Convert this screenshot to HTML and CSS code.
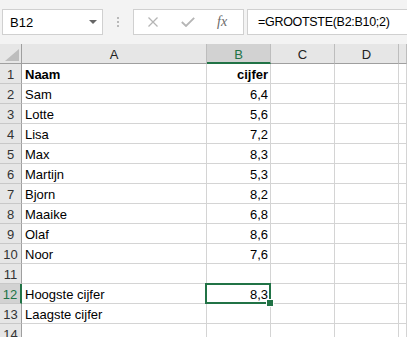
FILE: index.html
```html
<!DOCTYPE html>
<html lang="nl">
<head>
  <meta charset="UTF-8">
  <meta name="viewport" content="width=device-width, initial-scale=1.0">
  <title>Cijfers</title>
  <link rel="stylesheet" href="styles.css">
</head>
<body>
  <div class="toolbar">
    <div class="name-box">
      <span>B12</span>
      <svg class="drop" width="8" height="4" viewBox="0 0 8 4"><path d="M0 0H8L4 4Z" fill="#666"/></svg>
    </div>
    <div class="grip"><i></i><i></i><i></i></div>
    <div class="func-box">
      <svg width="10" height="10" viewBox="0 0 10 10"><path d="M0.5 0.5L9.5 9.5M9.5 0.5L0.5 9.5" stroke="#b5b5b5" stroke-width="1.3" fill="none"/></svg>
      <svg width="14" height="10" viewBox="0 0 14 10"><path d="M0.8 5L5 9L13.2 0.8" stroke="#b5b5b5" stroke-width="1.8" fill="none"/></svg>
      <span class="fx">fx</span>
    </div>
    <div class="formula">=GROOTSTE(B2:B10;2)</div>
  </div>

  <div class="sheet">
    <div class="row head">
      <div class="c corner"><svg width="14" height="12" viewBox="0 0 14 12"><path d="M14 0V12H0Z" fill="#bdbdbd"/></svg></div>
      <div class="c">A</div>
      <div class="c sel">B</div>
      <div class="c">C</div>
      <div class="c">D</div>
      <div class="c"></div>
    </div>
    <div class="row">
      <div class="c num">1</div><div class="c"><b>Naam</b></div><div class="c val"><b>cijfer</b></div><div class="c"></div><div class="c"></div><div class="c"></div>
    </div>
    <div class="row">
      <div class="c num">2</div><div class="c">Sam</div><div class="c val">6,4</div><div class="c"></div><div class="c"></div><div class="c"></div>
    </div>
    <div class="row">
      <div class="c num">3</div><div class="c">Lotte</div><div class="c val">5,6</div><div class="c"></div><div class="c"></div><div class="c"></div>
    </div>
    <div class="row">
      <div class="c num">4</div><div class="c">Lisa</div><div class="c val">7,2</div><div class="c"></div><div class="c"></div><div class="c"></div>
    </div>
    <div class="row">
      <div class="c num">5</div><div class="c">Max</div><div class="c val">8,3</div><div class="c"></div><div class="c"></div><div class="c"></div>
    </div>
    <div class="row">
      <div class="c num">6</div><div class="c">Martijn</div><div class="c val">5,3</div><div class="c"></div><div class="c"></div><div class="c"></div>
    </div>
    <div class="row">
      <div class="c num">7</div><div class="c">Bjorn</div><div class="c val">8,2</div><div class="c"></div><div class="c"></div><div class="c"></div>
    </div>
    <div class="row">
      <div class="c num">8</div><div class="c">Maaike</div><div class="c val">6,8</div><div class="c"></div><div class="c"></div><div class="c"></div>
    </div>
    <div class="row">
      <div class="c num">9</div><div class="c">Olaf</div><div class="c val">8,6</div><div class="c"></div><div class="c"></div><div class="c"></div>
    </div>
    <div class="row">
      <div class="c num">10</div><div class="c">Noor</div><div class="c val">7,6</div><div class="c"></div><div class="c"></div><div class="c"></div>
    </div>
    <div class="row">
      <div class="c num">11</div><div class="c"></div><div class="c val"></div><div class="c"></div><div class="c"></div><div class="c"></div>
    </div>
    <div class="row">
      <div class="c num sel">12</div><div class="c">Hoogste cijfer</div>
      <div class="c val active">8,3<span class="frame"></span><span class="handle"></span></div>
      <div class="c"></div><div class="c"></div><div class="c"></div>
    </div>
    <div class="row">
      <div class="c num">13</div><div class="c">Laagste cijfer</div><div class="c val"></div><div class="c"></div><div class="c"></div><div class="c"></div>
    </div>
    <div class="row">
      <div class="c num">14</div><div class="c"></div><div class="c val"></div><div class="c"></div><div class="c"></div><div class="c"></div>
    </div>
  </div>
</body>
</html>
```

FILE: styles.css
```css
body {
  margin: 0;
  font-family: "Liberation Sans", Arial, sans-serif;
  font-size: 13px;
  color: #000;
  background-color: #fff;
  overflow: hidden;
}
.toolbar {
  display: flex;
  align-items: flex-start;
  height: 44px;
  box-sizing: border-box;
  padding: 9px 0 0 2px;
  background-color: #f3f3f3;
}
.name-box {
  display: flex;
  align-items: center;
  justify-content: space-between;
  width: 101px;
  height: 26px;
  box-sizing: border-box;
  padding: 0 5px 0 7px;
  background-color: #fff;
  border: 1px solid #d0d0d0;
}
.grip {
  display: flex;
  flex-direction: column;
  align-items: center;
  gap: 2px;
  width: 30px;
  padding-top: 8px;
}
.grip i {
  width: 2px;
  height: 2px;
  background-color: #b9b9b9;
}
.func-box {
  display: flex;
  align-items: center;
  width: 111px;
  height: 26px;
  box-sizing: border-box;
  padding-left: 14px;
  background-color: #fff;
  border: 1px solid #d0d0d0;
}
.func-box svg:nth-child(2) {
  margin-left: 23px;
}
.fx {
  margin-left: 22px;
  font-family: "Liberation Serif", serif;
  font-style: italic;
  font-size: 14px;
  color: #6a6a6a;
}
.formula {
  flex: 1;
  height: 26px;
  box-sizing: border-box;
  margin-left: 3px;
  margin-right: -2px;
  padding-left: 10px;
  line-height: 24px;
  font-size: 12.5px;
  letter-spacing: -0.3px;
  background-color: #fff;
  border: 1px solid #d0d0d0;
}
.row {
  display: grid;
  grid-template-columns: 22px 185px 64px 64px 64px 1fr;
  height: 20px;
}
.c {
  position: relative;
  box-sizing: border-box;
  height: 20px;
  padding: 2px 3px 0 3px;
  line-height: 18px;
  white-space: nowrap;
  border-right: 1px solid #d4d4d4;
  border-bottom: 1px solid #d4d4d4;
}
.val {
  text-align: right;
  padding-right: 2px;
}
.head .c {
  text-align: center;
  color: #222;
  background-color: #e6e6e6;
  border-right-color: #bdbdbd;
  border-bottom-color: #9f9f9f;
}
.head .corner {
  display: flex;
  align-items: flex-end;
  justify-content: flex-end;
  padding: 0 2px 2px 0;
  border-right-color: #9f9f9f;
}
.head .sel {
  color: #217346;
  background-color: #d2d2d2;
  border-bottom: 2px solid #217346;
}
.num {
  text-align: center;
  padding: 2px 0 0 0;
  color: #333;
  background-color: #e6e6e6;
  border-right-color: #9f9f9f;
  border-bottom-color: #c8c8c8;
}
.num.sel {
  color: #217346;
  background-color: #d2d2d2;
  border-right: 2px solid #217346;
}
.active {
  z-index: 1;
}
.frame {
  position: absolute;
  top: -1px;
  left: -2px;
  right: -1px;
  bottom: -1px;
  border: 2px solid #217346;
}
.handle {
  position: absolute;
  right: -4px;
  bottom: -4px;
  width: 6px;
  height: 6px;
  background-color: #217346;
  border: 1px solid #fff;
}
```
